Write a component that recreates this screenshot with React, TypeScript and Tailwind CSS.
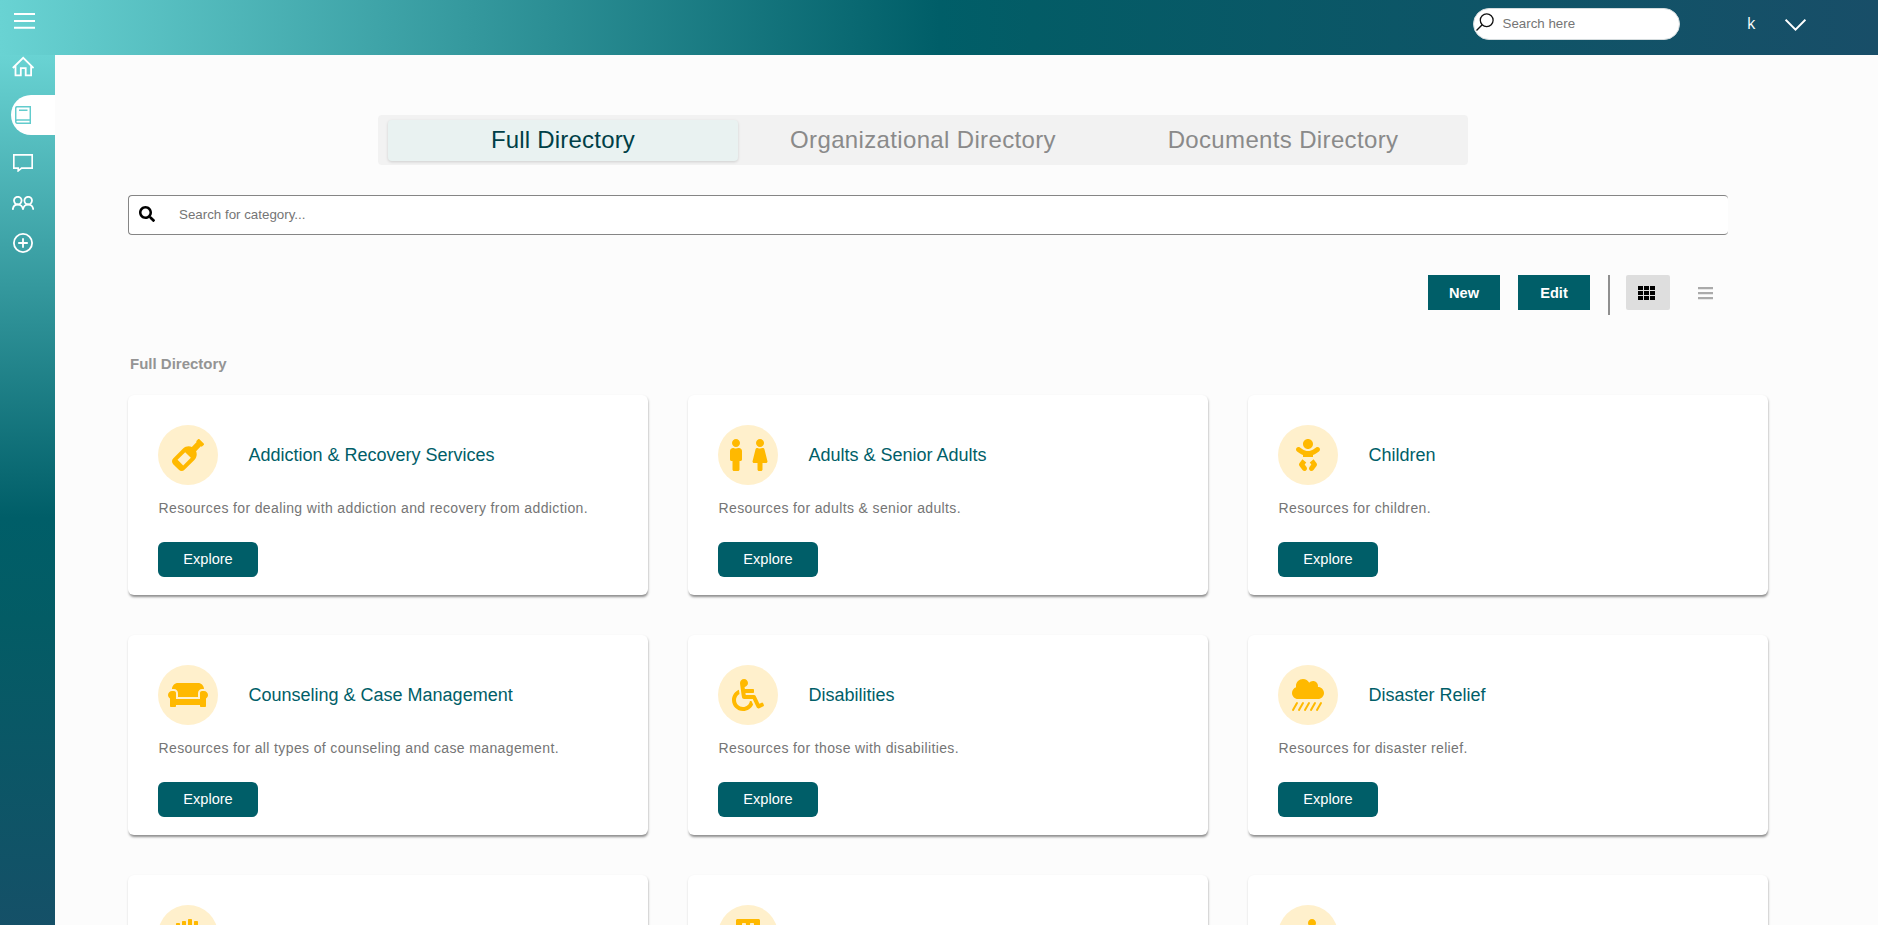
import type { ReactNode } from 'react';
import {
  FaBaby,
  FaBuilding,
  FaCloudShowersHeavy,
  FaCouch,
  FaFemale,
  FaFistRaised,
  FaMale,
  FaPray,
  FaSearch,
  FaWheelchair,
  FaWineBottle,
} from 'react-icons/fa';

type Category = { title: string; text: string; icon: ReactNode };

const categories: Category[] = [
  {
    title: 'Addiction & Recovery Services',
    text: 'Resources for dealing with addiction and recovery from addiction.',
    icon: <FaWineBottle />,
  },
  {
    title: 'Adults & Senior Adults',
    text: 'Resources for adults & senior adults.',
    icon: (
      <div className="flex gap-[10px] pl-px">
        <FaMale className="w-3" />
        <FaFemale className="w-4" />
      </div>
    ),
  },
  { title: 'Children', text: 'Resources for children.', icon: <FaBaby /> },
  {
    title: 'Counseling & Case Management',
    text: 'Resources for all types of counseling and case management.',
    icon: <FaCouch className="w-10" />,
  },
  { title: 'Disabilities', text: 'Resources for those with disabilities.', icon: <FaWheelchair /> },
  { title: 'Disaster Relief', text: 'Resources for disaster relief.', icon: <FaCloudShowersHeavy /> },
];

const partialIcons: ReactNode[] = [<FaFistRaised />, <FaBuilding />, <FaPray />];

const tabs = ['Full Directory', 'Organizational Directory', 'Documents Directory'];

function Header() {
  return (
    <header className="flex h-[55px] shrink-0 bg-[linear-gradient(90deg,#69d3d3_0%,#005e68_50%,#035c66_55%,#184e68_100%)] pl-[14px]">
      <svg className="mt-[12px] h-[18px] w-[21px]" viewBox="0 0 21 18" fill="none" stroke="#fff" strokeWidth="2">
        <path d="M0 2h21M0 9h21M0 15.700h21" />
      </svg>
      <div className="mt-2 mr-[67px] ml-auto flex h-8 w-[207px] items-center rounded-full border border-[#d5dcde] bg-white pl-[2px]">
        <svg className="-mt-1 h-[18px] w-[18px]" viewBox="0 0 18 18" fill="none" stroke="#111" strokeWidth="1.3">
          <circle cx="10.7" cy="7.3" r="6.4" />
          <path d="M6.2 11.8L.5 17.5" />
        </svg>
        <span className="ml-[8.5px] pb-px text-[13.33px] text-[#757575]">Search here</span>
      </div>
      <span className="mt-[11px] w-[38px] font-['Open_Sans',sans-serif] text-base font-medium text-white">k</span>
      <svg className="mt-[18px] mr-[72px] h-[14px] w-[21px]" viewBox="0 0 21 14" fill="none" stroke="#fff" strokeWidth="2">
        <path d="M.6 1.600l9.900 10 9.900-10" />
      </svg>
    </header>
  );
}

function Sidebar() {
  return (
    <nav className="flex h-[925px] w-[55px] shrink-0 flex-col bg-[linear-gradient(180deg,#69d3d3_0%,#005e68_50%,#035c65_61%,#184e68_100%)] text-white">
      <svg className="mt-px ml-3 h-[22px] w-[22px] shrink-0" viewBox="0 0 22 22" fill="none" stroke="currentColor" strokeWidth="1.8">
        <path d="M.8 12L11.200 1.800 21.600 12M3.500 10v9.400h5.300V12.200h4.900v7.200h5.400V10" />
      </svg>
      <div className="mt-[17px] ml-[11px] flex h-10 shrink-0 items-center rounded-l-[20px] bg-white pl-1">
        <svg className="h-[18px] w-4" viewBox="0 0 16 18" fill="none" stroke="#62cccd" strokeWidth="1.5">
          <path d="M15.300.7H2.200Q.7.7.7 2.400v13q0 1.900 1.700 1.900h12.900zM.7 15.400q0-1.500 1.700-1.500h12.900M4 4.300h8.500" />
        </svg>
      </div>
      <svg className="mt-[19px] ml-[13px] h-[18px] w-5 shrink-0" viewBox="0 0 20 18" fill="none" stroke="currentColor" strokeWidth="1.7">
        <path d="M.8.8h18.400v13.300H8.600L5.200 16.800v-2.700H.8z" />
      </svg>
      <svg className="mt-6 ml-3 h-[14px] w-[22px] shrink-0" viewBox="0 0 22 14" fill="none" stroke="currentColor" strokeWidth="1.800">
        <circle cx="5.8" cy="4.6" r="3.8" />
        <circle cx="16.2" cy="4.6" r="3.8" />
        <path d="M.7 13.800c.3-3.100 2.400-5.300 5.100-5.300s5 2.200 5.200 5.300c.2-3.100 2.400-5.300 5.200-5.300s4.900 2.200 5.100 5.300" />
      </svg>
      <svg className="mt-[23px] ml-[13px] h-5 w-5 shrink-0" viewBox="0 0 20 20" fill="none" stroke="currentColor" strokeWidth="1.8">
        <circle cx="10" cy="10" r="9.1" />
        <path d="M10 5.200v9.600M5.200 10h9.600" />
      </svg>
    </nav>
  );
}

const cardClass =
  'flex h-[200px] flex-col items-start rounded-md bg-white px-[30px] pt-[30px] shadow-[0.5px_2px_2.5px_-0.5px_#8c8c8c]';

function IconCircle({ children }: { children: ReactNode }) {
  return (
    <div className="flex h-[60px] w-[60px] items-center justify-center rounded-full bg-[#fff0cc] text-[32px] text-[#ffb900]">
      {children}
    </div>
  );
}

function Card({ title, text, icon }: Category) {
  return (
    <article className={cardClass}>
      <div className="flex h-[60px] items-center gap-[30px]">
        <IconCircle>{icon}</IconCircle>
        <h3 className="pl-[0.5px] text-[18px] leading-5 text-[#005e68]">{title}</h3>
      </div>
      <p className="mt-[15px] pl-[0.5px] text-sm leading-4 tracking-[0.37px] text-[#757575]">{text}</p>
      <button className="mt-[26px] h-[35px] w-[100px] rounded-md bg-[#005e68] text-[14.6px] text-white">Explore</button>
    </article>
  );
}

export default function App() {
  return (
    <div className="flex h-[925px] flex-col overflow-hidden bg-[#fcfcfc] font-['Liberation_Sans',Arial,sans-serif]">
      <Header />
      <div className="flex min-h-0 flex-1">
        <Sidebar />
        <main className="flex flex-1 flex-col pl-[73px]">
          <div className="mt-[60px] ml-[250px] flex h-[50px] w-[1090px] shrink-0 items-center gap-[10px] rounded-[4px] bg-[#f2f2f2] px-[10px]">
            {tabs.map((tab, i) => (
              <button
                key={tab}
                className={
                  i === 0
                    ? 'h-[41px] w-[350px] rounded-[4px] bg-[#e9f2f1] text-2xl tracking-[0.2px] text-[#003f47] shadow-[0_1px_3px_rgba(0,0,0,0.15)]'
                    : 'h-[41px] w-[350px] text-2xl tracking-[0.35px] text-[#8a8a8a]'
                }
              >
                {tab}
              </button>
            ))}
          </div>

          <div className="mt-[30px] flex h-10 w-[1600px] shrink-0 items-center rounded-[4px] border border-r-0 border-[#858585] bg-white pl-[10px]">
            <FaSearch className="-mt-[3px] h-4 w-4 text-black" />
            <span className="ml-6 pb-px text-[13.33px] text-[#757575]">Search for category...</span>
          </div>

          <div className="mt-10 flex h-10 w-[1601px] shrink-0 items-start justify-end text-[14.6px] font-bold text-white">
            <button className="mr-[18px] h-[35px] w-[72px] bg-[#005e68] pt-[2px]">New</button>
            <button className="mr-[18px] h-[35px] w-[72px] bg-[#005e68] pt-[2px]">Edit</button>
            <div className="mr-4 h-10 w-[2px] bg-[#8f8f8f]" />
            <button className="mr-[13px] flex h-[35px] w-11 items-start rounded-[2px] bg-[#dedede] pt-[11px] pl-3 text-black">
              <svg className="h-[14px] w-[17px]" viewBox="0 0 17 14" fill="none" stroke="currentColor" strokeWidth="4">
                <path d="M0 2h17M0 7h17M0 12h17" strokeDasharray="5 1" />
              </svg>
            </button>
            <button className="flex h-[35px] w-[46px] items-start pt-3 pl-[15px] text-[#aaa]">
              <svg className="h-[13px] w-[15px]" viewBox="0 0 15 13" fill="none" stroke="currentColor" strokeWidth="2.3">
                <path d="M0 1.200h15M0 6.200h15M0 11.200h15" />
              </svg>
            </button>
          </div>

          <h2 className="mt-[41px] pl-[2px] text-[15px] leading-4 font-bold text-[#949494]">Full Directory</h2>

          <section className="mt-[23px] grid w-[1640px] grid-cols-3 gap-10">
            {categories.map((c) => (
              <Card key={c.title} {...c} />
            ))}
            {partialIcons.map((icon, i) => (
              <article key={i} className={cardClass}>
                <IconCircle>{icon}</IconCircle>
              </article>
            ))}
          </section>
        </main>
      </div>
    </div>
  );
}
